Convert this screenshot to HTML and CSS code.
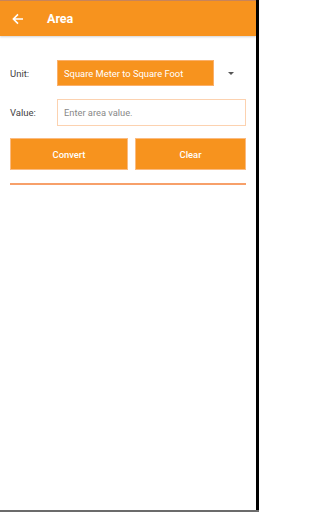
FILE: index.html
```html
<!DOCTYPE html>
<html>
<head>
<meta charset="utf-8">
<link rel="stylesheet" href="styles.css">
</head>
<body>
<div class="device">
  <div class="screen">
    <header class="appbar">
      <svg class="back" width="12" height="12" viewBox="0 0 12 12">
        <path d="M11 6H1.8M6 1.4L1.4 6L6 10.6" stroke="#fff" stroke-width="1.6" fill="none"/>
      </svg>
      <span class="title">Area</span>
    </header>
    <main class="content">
      <div class="row">
        <span class="label">Unit:</span>
        <div class="spinner">
          <div class="spinner-box">Square Meter to Square Foot</div>
          <span class="caret"></span>
        </div>
      </div>
      <div class="row row-value">
        <span class="label">Value:</span>
        <div class="input">Enter area value.</div>
      </div>
      <div class="buttons">
        <div class="btn btn-convert">Convert</div>
        <div class="btn btn-clear">Clear</div>
      </div>
      <div class="divider"></div>
    </main>
  </div>
  <div class="edge"></div>
</div>
<div class="bottom"></div>
</body>
</html>
```
FILE: styles.css
```css
html, body {
  margin: 0;
  padding: 0;
  background: #fff;
}
body {
  font-family: Roboto, "Liberation Sans", sans-serif;
  width: 259px;
  height: 512px;
  overflow: hidden;
}
.device {
  display: flex;
  height: 510px;
}
.screen {
  width: 256px;
  display: flex;
  flex-direction: column;
  background: #fff;
}
.edge {
  width: 3px;
  background: #000;
}
.bottom {
  height: 2px;
  background: #6b6b6b;
}
.appbar {
  height: 36px;
  box-sizing: border-box;
  background: #f7931e;
  border-top: 1px solid #c8845a;
  display: flex;
  align-items: center;
  box-shadow: 0 1px 2px rgba(0,0,0,0.18);
}
.back {
  margin-left: 12px;
}
.title {
  margin-left: 23px;
  color: #fff;
  font-weight: bold;
  font-size: 12.5px;
}
.content {
  padding: 24px 10px 0 10px;
}
.row {
  display: flex;
  align-items: center;
}
.label {
  width: 47px;
  font-size: 9.5px;
  color: #444;
}
.spinner {
  flex: 1;
  display: flex;
  align-items: center;
  height: 26px;
}
.spinner-box {
  width: 157px;
  height: 26px;
  box-sizing: border-box;
  background: #f7931e;
  border: 1px solid #fbb06a;
  color: #fff;
  font-size: 9.4px;
  padding-left: 6px;
  display: flex;
  align-items: center;
}
.caret {
  margin-left: 14px;
  width: 0;
  height: 0;
  border-left: 3px solid transparent;
  border-right: 3px solid transparent;
  border-top: 3px solid #555;
}
.row-value {
  margin-top: 13px;
}
.input {
  flex: 1;
  height: 27px;
  box-sizing: border-box;
  border: 1px solid #fcd2b0;
  font-size: 9.3px;
  color: #888;
  padding-left: 6px;
  display: flex;
  align-items: center;
}
.buttons {
  display: flex;
  gap: 7px;
  margin-top: 12px;
}
.btn {
  height: 32px;
  box-sizing: border-box;
  background: #f7931e;
  border: 1px solid #fbbb80;
  color: #fff;
  font-size: 9.4px;
  font-weight: 500;
  display: flex;
  align-items: center;
  justify-content: center;
}
.btn-convert {
  width: 118px;
}
.btn-clear {
  flex: 1;
}
.divider {
  margin-top: 13px;
  height: 1.5px;
  background: #f7a06a;
}
```
